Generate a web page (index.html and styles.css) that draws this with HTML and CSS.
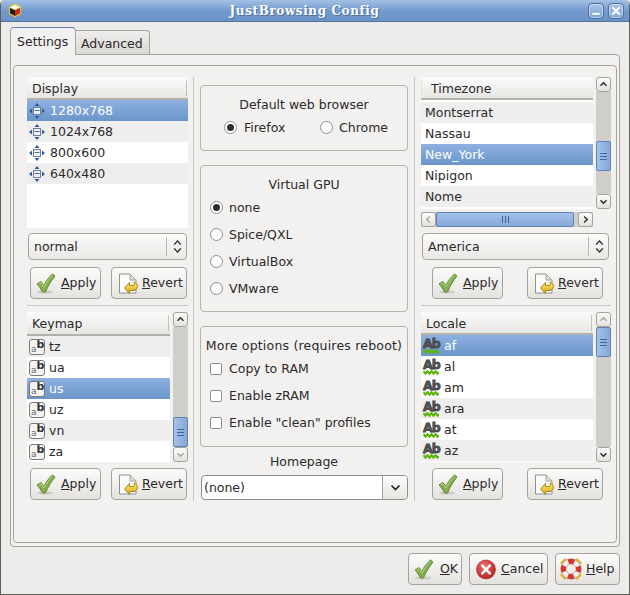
FILE: index.html
```html
<!DOCTYPE html>
<html lang="en">
<head>
  <meta charset="UTF-8">
  <meta name="viewport" content="width=device-width, initial-scale=1.0">
  <title>JustBrowsing Config</title>
  <link rel="stylesheet" href="styles.css">
</head>
<body>

  <svg class="icon-defs" aria-hidden="true">
    <defs>
      <linearGradient id="ringGold" x1="0" y1="0" x2="0" y2="1">
        <stop offset="0" stop-color="#fbe46a"/>
        <stop offset="1" stop-color="#d9a916"/>
      </linearGradient>
      <radialGradient id="redBall" cx="0.4" cy="0.3" r="0.8">
        <stop offset="0" stop-color="#ee6a6a"/>
        <stop offset="1" stop-color="#b01c1c"/>
      </radialGradient>
    </defs>
    <symbol id="i-check" viewBox="0 0 20 21">
      <ellipse cx="9" cy="19" rx="8" ry="1.6" fill="#000" opacity="0.12"/>
      <path d="M1 11 L5 8.5 L7.8 12.5 C10 8 13 4 16.5 1 L19 3 C15 8 12 13 9.5 19 L6.5 19 C5 16 3 13 1 11 Z" fill="#85ae4e" stroke="#618c33" stroke-linejoin="round"/>
      <path d="M3 11 L5 9.8 L8 14 C10.5 9 13.5 5 16.5 2.5" fill="none" stroke="#b4d585" stroke-width="1"/>
    </symbol>
    <symbol id="i-revert" viewBox="0 0 20 21">
      <path d="M1.5 1 H12 L18 7 V20 H1.5 Z" fill="#fbfbf9" stroke="#8f8f8a"/>
      <path d="M12 1 V7 H18 Z" fill="#dedfdc" stroke="#a5a5a0"/>
      <path d="M11.5 9.5 V12.5 H15 C16 12.5 16.5 11 16 9 C19 10 20 13 19 15 C18 17 16.5 17.5 15 17.5 H11.5 V20.5 L6.5 15 Z" fill="url(#ringGold)" stroke="#a8851a" stroke-linejoin="round"/>
    </symbol>
    <symbol id="i-move" viewBox="0 0 16 16">
      <rect x="4.5" y="4.5" width="7" height="7" fill="#eef1f6" stroke="#6d7f99"/>
      <path d="M5.5 7.5 H10.5" stroke="#4d6a96"/>
      <path d="M8 0 L10.5 3 H5.5 Z M8 16 L10.5 13 H5.5 Z M0 8 L3 5.5 V10.5 Z M16 8 L13 5.5 V10.5 Z" fill="#2f5a9c"/>
    </symbol>
    <symbol id="i-wave" viewBox="0 0 16 5">
      <path d="M0.5 1.2 L2.5 3.6 L4.5 1.2 L6.5 3.6 L8.5 1.2 L10.5 3.6 L12.5 1.2 L14.5 3.6 L15.5 2" fill="none" stroke="#5cb30a" stroke-width="2.2"/>
    </symbol>
    <symbol id="i-cancel" viewBox="0 0 20 20">
      <circle cx="10" cy="10" r="9.5" fill="url(#redBall)" stroke="#a81f1f" stroke-width="0.6"/>
      <path d="M6.2 6.2 L13.8 13.8 M13.8 6.2 L6.2 13.8" stroke="#fff" stroke-width="2.6" stroke-linecap="round"/>
    </symbol>
    <symbol id="i-help" viewBox="0 0 22 22">
      <path d="M5 1.5 L1.5 5 M17 1.5 L20.5 5 M1.5 17 L5 20.5 M20.5 17 L17 20.5" stroke="#e3b51f" stroke-width="2.4" stroke-linecap="round"/>
      <circle cx="11" cy="11" r="7.6" fill="none" stroke="#f5f2ee" stroke-width="5.2"/>
      <circle cx="11" cy="11" r="7.6" fill="none" stroke="#d9362c" stroke-width="5.2" stroke-dasharray="6 5.94" stroke-dashoffset="3"/>
      <circle cx="11" cy="11" r="10.1" fill="none" stroke="#a05a50" stroke-width="0.5"/>
      <circle cx="11" cy="11" r="5" fill="#f2f1ef" stroke="#a05a50" stroke-width="0.5"/>
    </symbol>
  </svg>

  <div class="window">
    <header class="titlebar">
      <svg class="app-icon" viewBox="0 0 14 15" aria-hidden="true">
        <path d="M7 0.5 L13 3.5 V11 L7 14.5 L1 11 V3.5 Z" fill="#e6c52a"/>
        <path d="M7 2 L12 4.3 L7 6.6 L2 4.3 Z" fill="#fff"/>
        <path d="M2 5 L7 7.3 V13 L2 10.3 Z" fill="#1c1c1c"/>
        <path d="M12 5 L7 7.3 V13 L12 10.3 Z" fill="#c8281e"/>
      </svg>
      <span class="title-text">JustBrowsing Config</span>
      <div class="wm-buttons">
        <span class="wm-btn"><svg viewBox="0 0 15 15" aria-hidden="true"><path d="M3.5 10.5 H11.5" stroke="#fff" stroke-width="2"/></svg></span>
        <span class="wm-btn"><svg viewBox="0 0 15 15" aria-hidden="true"><path d="M3.5 3.5 L11.5 11.5 M11.5 3.5 L3.5 11.5" stroke="#fff" stroke-width="2.2"/></svg></span>
      </div>
    </header>

    <div class="content">
      <div class="tabs">
        <div class="tab tab-active">Settings</div>
        <div class="tab">Advanced</div>
      </div>

      <div class="notebook">
        <div class="frame">

          <div class="col col-left">
            <div class="listbox listbox-display">
              <div class="tree">
                <div class="tree-head"><span class="head-cell">Display</span></div>
                <div class="row selected"><svg class="row-icon"><use href="#i-move"/></svg>1280x768</div>
                <div class="row alt"><svg class="row-icon"><use href="#i-move"/></svg>1024x768</div>
                <div class="row"><svg class="row-icon"><use href="#i-move"/></svg>800x600</div>
                <div class="row alt"><svg class="row-icon"><use href="#i-move"/></svg>640x480</div>
              </div>
            </div>
            <div class="combo combo-left">
              <span class="combo-label">normal</span>
              <span class="combo-arrows"><svg viewBox="0 0 9 16" aria-hidden="true"><path d="M1 6 L4.5 2 L8 6 M1 10 L4.5 14 L8 10" fill="none" stroke="#222" stroke-width="1.4"/></svg></span>
            </div>
            <div class="btn-row btn-row-left">
              <button class="btn btn-apply"><svg class="btn-icon"><use href="#i-check"/></svg><span><u>A</u>pply</span></button>
              <button class="btn btn-revert"><svg class="btn-icon"><use href="#i-revert"/></svg><span><u>R</u>evert</span></button>
            </div>
            <div class="hsep"></div>
            <div class="listbox listbox-list">
              <div class="tree tree-narrow">
                <div class="tree-head"><span class="head-cell">Keymap</span></div>
                <div class="row alt"><span class="ab-icon" aria-hidden="true"><i>a</i><b>b</b></span>tz</div>
                <div class="row"><span class="ab-icon" aria-hidden="true"><i>a</i><b>b</b></span>ua</div>
                <div class="row selected"><span class="ab-icon" aria-hidden="true"><i>a</i><b>b</b></span>us</div>
                <div class="row"><span class="ab-icon" aria-hidden="true"><i>a</i><b>b</b></span>uz</div>
                <div class="row alt"><span class="ab-icon" aria-hidden="true"><i>a</i><b>b</b></span>vn</div>
                <div class="row"><span class="ab-icon" aria-hidden="true"><i>a</i><b>b</b></span>za</div>
              </div>
              <div class="vscroll">
                <span class="arrow"><svg viewBox="0 0 15 15" aria-hidden="true"><path d="M4 9 L7.5 5.5 L11 9" class="chev"/></svg></span>
                <div class="trough"><div class="thumb thumb-end"><i></i><i></i><i></i></div></div>
                <span class="arrow arrow-off"><svg viewBox="0 0 15 15" aria-hidden="true"><path d="M4 6 L7.5 9.5 L11 6" class="chev"/></svg></span>
              </div>
            </div>
            <div class="btn-row btn-row-left">
              <button class="btn btn-apply"><svg class="btn-icon"><use href="#i-check"/></svg><span><u>A</u>pply</span></button>
              <button class="btn btn-revert"><svg class="btn-icon"><use href="#i-revert"/></svg><span><u>R</u>evert</span></button>
            </div>
          </div>

          <div class="vsep"></div>

          <div class="col col-mid">
            <div class="group group-browser">
              <div class="group-title">Default web browser</div>
              <div class="radio-line">
                <label class="opt opt-firefox"><span class="radio on"></span>Firefox</label>
                <label class="opt"><span class="radio"></span>Chrome</label>
              </div>
            </div>
            <div class="group group-gpu">
              <div class="group-title">Virtual GPU</div>
              <label class="opt opt-row"><span class="radio on"></span>none</label>
              <label class="opt opt-row"><span class="radio"></span>Spice/QXL</label>
              <label class="opt opt-row"><span class="radio"></span>VirtualBox</label>
              <label class="opt opt-row"><span class="radio"></span>VMware</label>
            </div>
            <div class="group group-more">
              <div class="group-title">More options (requires reboot)</div>
              <label class="opt opt-row"><span class="check"></span>Copy to RAM</label>
              <label class="opt opt-row"><span class="check"></span>Enable zRAM</label>
              <label class="opt opt-row"><span class="check"></span>Enable "clean" profiles</label>
            </div>
            <div class="home-label">Homepage</div>
            <div class="combo-entry">
              <span class="entry-text">(none)</span>
              <span class="entry-btn"><svg viewBox="0 0 11 8" aria-hidden="true"><path d="M1.5 1.5 L5.5 5.5 L9.5 1.5" fill="none" stroke="#222" stroke-width="1.7"/></svg></span>
            </div>
          </div>

          <div class="vsep vsep-right"></div>

          <div class="col col-right">
            <div class="listbox listbox-zone">
              <div class="zone-main">
                <div class="tree tree-zone">
                  <div class="tree-head"><span class="head-cell head-zone">Timezone</span></div>
                  <div class="zone-rows">
                    <div class="row alt plain">Montserrat</div>
                    <div class="row plain">Nassau</div>
                    <div class="row selected plain">New_York</div>
                    <div class="row plain">Nipigon</div>
                    <div class="row alt plain">Nome</div>
                  </div>
                </div>
                <div class="hscroll">
                  <span class="arrow arrow-off"><svg viewBox="0 0 15 15" aria-hidden="true"><path d="M9 4 L5.5 7.5 L9 11" class="chev"/></svg></span>
                  <div class="hthumb"><i></i><i></i><i></i></div>
                  <span class="arrow"><svg viewBox="0 0 15 15" aria-hidden="true"><path d="M6 4 L9.5 7.5 L6 11" class="chev"/></svg></span>
                </div>
              </div>
              <div class="vscroll">
                <span class="arrow"><svg viewBox="0 0 15 15" aria-hidden="true"><path d="M4 9 L7.5 5.5 L11 9" class="chev"/></svg></span>
                <div class="trough"><div class="thumb thumb-mid"><i></i><i></i><i></i></div></div>
                <span class="arrow"><svg viewBox="0 0 15 15" aria-hidden="true"><path d="M4 6 L7.5 9.5 L11 6" class="chev"/></svg></span>
              </div>
            </div>
            <div class="combo combo-right">
              <span class="combo-label">America</span>
              <span class="combo-arrows"><svg viewBox="0 0 9 16" aria-hidden="true"><path d="M1 6 L4.5 2 L8 6 M1 10 L4.5 14 L8 10" fill="none" stroke="#222" stroke-width="1.4"/></svg></span>
            </div>
            <div class="btn-row btn-row-right">
              <button class="btn btn-apply"><svg class="btn-icon"><use href="#i-check"/></svg><span><u>A</u>pply</span></button>
              <button class="btn btn-revert"><svg class="btn-icon"><use href="#i-revert"/></svg><span><u>R</u>evert</span></button>
            </div>
            <div class="hsep"></div>
            <div class="listbox listbox-list">
              <div class="tree tree-wide">
                <div class="tree-head"><span class="head-cell">Locale</span></div>
                <div class="row selected"><span class="spell-icon" aria-hidden="true"><b>Ab</b><svg><use href="#i-wave"/></svg></span>af</div>
                <div class="row"><span class="spell-icon" aria-hidden="true"><b>Ab</b><svg><use href="#i-wave"/></svg></span>al</div>
                <div class="row"><span class="spell-icon" aria-hidden="true"><b>Ab</b><svg><use href="#i-wave"/></svg></span>am</div>
                <div class="row alt"><span class="spell-icon" aria-hidden="true"><b>Ab</b><svg><use href="#i-wave"/></svg></span>ara</div>
                <div class="row"><span class="spell-icon" aria-hidden="true"><b>Ab</b><svg><use href="#i-wave"/></svg></span>at</div>
                <div class="row alt"><span class="spell-icon" aria-hidden="true"><b>Ab</b><svg><use href="#i-wave"/></svg></span>az</div>
              </div>
              <div class="vscroll">
                <span class="arrow arrow-off"><svg viewBox="0 0 15 15" aria-hidden="true"><path d="M4 9 L7.5 5.5 L11 9" class="chev"/></svg></span>
                <div class="trough"><div class="thumb"><i></i><i></i><i></i></div></div>
                <span class="arrow"><svg viewBox="0 0 15 15" aria-hidden="true"><path d="M4 6 L7.5 9.5 L11 6" class="chev"/></svg></span>
              </div>
            </div>
            <div class="btn-row btn-row-right">
              <button class="btn btn-apply"><svg class="btn-icon"><use href="#i-check"/></svg><span><u>A</u>pply</span></button>
              <button class="btn btn-revert"><svg class="btn-icon"><use href="#i-revert"/></svg><span><u>R</u>evert</span></button>
            </div>
          </div>

        </div>
      </div>

      <div class="actions">
        <button class="btn btn-ok"><svg class="btn-icon"><use href="#i-check"/></svg><span><u>O</u>K</span></button>
        <button class="btn btn-cancel"><svg class="btn-icon"><use href="#i-cancel"/></svg><span><u>C</u>ancel</span></button>
        <button class="btn btn-help"><svg class="btn-icon btn-icon-help"><use href="#i-help"/></svg><span><u>H</u>elp</span></button>
      </div>
    </div>
  </div>

</body>
</html>
```

FILE: styles.css
```css
* {
  box-sizing: border-box;
}

html, body {
  margin: 0;
  padding: 0;
}

body {
  width: 630px;
  height: 595px;
  overflow: hidden;
  font-family: 'DejaVu Sans', sans-serif;
  font-size: 12.5px;
  color: #2a2a2a;
  background-color: #edecea;
}

.icon-defs {
  position: absolute;
  width: 0;
  height: 0;
}

.window {
  width: 630px;
  height: 595px;
  display: flex;
  flex-direction: column;
  border: 1px solid #5f5f5c;
  border-top: 0;
  border-radius: 5px 5px 0 0;
  background-color: #edecea;
}

/* title bar */
.titlebar {
  height: 22px;
  flex: none;
  display: flex;
  align-items: center;
  padding: 0 5px 0 7px;
  background: linear-gradient(#a4c0e4, #7199cd 55%, #6c93c6);
  border-bottom: 1px solid #53739f;
  border-radius: 5px 5px 0 0;
}

.app-icon {
  width: 14px;
  height: 15px;
}

.title-text {
  flex: 1;
  padding-right: 1px;
  text-align: center;
  font-family: 'DejaVu Serif', serif;
  font-weight: bold;
  font-size: 12px;
  letter-spacing: 0.6px;
  color: #fff;
  text-shadow: 1px 1px 0 #4d6d9c;
}

.wm-buttons {
  display: flex;
  gap: 4px;
}

.wm-btn {
  width: 16px;
  height: 16px;
  border: 1px solid #4a6c9d;
  border-radius: 4px;
  background: linear-gradient(#a9c4e6, #7fa3d2);
  box-shadow: inset 0 0 0 1px rgba(255, 255, 255, 0.45);
  display: block;
}

.wm-btn svg {
  display: block;
  width: 14px;
  height: 14px;
}

.content {
  flex: 1;
  display: flex;
  flex-direction: column;
  padding: 5px 9px 0;
}

/* tabs */
.tabs {
  display: flex;
  align-items: flex-end;
  height: 27px;
  flex: none;
  position: relative;
  z-index: 1;
}

.tab {
  height: 24px;
  padding: 5px 6px 0 5px;
  background: linear-gradient(#efeeec, #d9d8d5);
  border: 1px solid #a6a39f;
  border-left: 0;
  border-bottom: 0;
  border-radius: 0 4px 0 0;
}

.tab-active {
  height: 28px;
  width: 66px;
  padding: 6px 0 0 6px;
  background: #f2f1ef;
  border: 1px solid #a6a39f;
  border-top: 1px solid #5e83b3;
  border-bottom: 0;
  border-radius: 4px 4px 0 0;
  margin-bottom: -1px;
}

.notebook {
  height: 493px;
  flex: none;
  padding: 10px 2px 2px;
  background-color: #f2f1ef;
  border: 1px solid #a6a39f;
  border-radius: 0 4px 4px 4px;
}

.frame {
  height: 478px;
  display: flex;
  padding: 11px 5px 0 13px;
  border: 1px solid #a6a39f;
  border-radius: 4px;
}

.col {
  flex: none;
}

.col-left {
  width: 161px;
}

.col-mid {
  width: 208px;
  padding-top: 8px;
}

.col-right {
  width: 190px;
}

.vsep {
  width: 1px;
  height: 424px;
  flex: none;
  margin: 0 6px 0 5px;
  background-color: #c9c7c3;
}

.vsep-right {
  margin-left: 6px;
}

/* lists */
.listbox {
  display: flex;
  gap: 3px;
}

.listbox-display {
  height: 151px;
  background-color: #fff;
}

.listbox-list {
  height: 150px;
}

.listbox-zone {
  height: 151px;
}

.tree {
  width: 100%;
  background-color: #fff;
}

.tree-narrow {
  width: 143px;
}

.tree-narrow .tree-head {
  height: 24px;
}

.tree-wide, .tree-zone {
  width: 172px;
}

.zone-main {
  width: 172px;
}

.tree-zone {
  height: 132px;
}

.zone-rows {
  padding-top: 2px;
}

.tree-head {
  height: 23px;
  padding: 3px 1px 1px 0;
  background: linear-gradient(#fbfbfa, #e7e6e3);
  border-bottom: 2px solid #b3b1ac;
}

.head-cell {
  display: block;
  height: 16px;
  line-height: 18px;
  padding-left: 5px;
  border-right: 1px solid #c4c2be;
}

.head-zone {
  padding-left: 9px;
  border-right: 0;
  border-left: 1px solid #e2e1de;
}

.row {
  height: 21px;
  line-height: 21px;
  display: flex;
  align-items: center;
  padding-left: 2px;
  white-space: nowrap;
}

.row.plain {
  padding-left: 4px;
}

.row.alt {
  background-color: #eeeeee;
}

.row.selected {
  background: linear-gradient(#8db1e0, #6b95ca);
  color: #fff;
}

.row-icon {
  width: 16px;
  height: 16px;
  margin-right: 5px;
  flex: none;
}

/* keymap and locale row icons */
.ab-icon {
  width: 16px;
  height: 16px;
  margin-right: 4px;
  flex: none;
  display: flex;
  justify-content: space-between;
  padding: 0 0 0 1px;
  background-color: #f4f4f2;
  border: 1px solid #77797a;
  border-radius: 3px;
  color: #2e3436;
}

.ab-icon i {
  font-style: normal;
  font-size: 9px;
  color: #666;
  align-self: flex-end;
  line-height: 9px;
}

.ab-icon b {
  font-size: 11px;
  line-height: 10px;
}

.spell-icon {
  width: 16px;
  height: 16px;
  margin-right: 5px;
  flex: none;
  display: flex;
  flex-direction: column;
  color: #555;
}

.spell-icon b {
  display: block;
  height: 11px;
  line-height: 11px;
  font-size: 12.5px;
  letter-spacing: -1px;
  -webkit-text-stroke: 0.8px #444;
}

.spell-icon svg {
  display: block;
  width: 16px;
  height: 5px;
}

/* scrollbars */
.vscroll {
  width: 15px;
  flex: none;
  display: flex;
  flex-direction: column;
  border-radius: 4px;
}

.listbox-zone .vscroll {
  height: 132px;
}

.arrow {
  width: 15px;
  height: 15px;
  flex: none;
  display: block;
  background: linear-gradient(#fbfbfa, #e2e1de);
  border: 1px solid #a6a39f;
  border-radius: 3px;
}

.arrow svg {
  display: block;
  width: 13px;
  height: 13px;
}

.chev {
  fill: none;
  stroke: #222;
  stroke-width: 1.5;
}

.arrow-off .chev {
  stroke: #a6a39f;
}

.trough {
  flex: 1;
  background-color: #cfcecb;
}

.thumb {
  height: 30px;
  display: flex;
  flex-direction: column;
  align-items: center;
  justify-content: center;
  gap: 2px;
  background: linear-gradient(90deg, #a4c2e8, #86a9da);
  border: 1px solid #5e83b3;
  border-radius: 2px;
}

.thumb i {
  display: block;
  width: 7px;
  height: 1px;
  background-color: #45659a;
}

.thumb-mid {
  margin-top: 49px;
}

.thumb-end {
  margin-top: 90px;
}

.hscroll {
  height: 15px;
  margin-top: 3px;
  display: flex;
  width: 172px;
  background-color: #cfcecb;
}

.hthumb {
  width: 138px;
  margin-right: 4px;
  display: flex;
  align-items: center;
  justify-content: center;
  gap: 2px;
  background: linear-gradient(#a4c2e8, #86a9da);
  border: 1px solid #5e83b3;
  border-radius: 2px;
}

.hthumb i {
  display: block;
  width: 1px;
  height: 7px;
  background-color: #45659a;
}

/* combos */
.combo {
  height: 27px;
  margin-top: 5px;
  display: flex;
  align-items: center;
  justify-content: space-between;
  padding-left: 5px;
  background: linear-gradient(#fbfbfa, #e9e8e5);
  border: 1px solid #a6a39f;
  border-radius: 4px;
}

.combo-left {
  width: 159px;
  margin-left: 1px;
}

.combo-right {
  width: 187px;
  margin-left: 1px;
}

.combo-arrows {
  width: 20px;
  height: 19px;
  padding: 2px 0 0 6px;
  border-left: 1px solid #b9b7b2;
}

.combo-arrows svg {
  display: block;
  width: 9px;
  height: 15px;
}

.combo-entry {
  height: 25px;
  margin: 5px 0 0 1px;
  display: flex;
  border: 1px solid #8f8d89;
  border-radius: 4px;
  background-color: #fff;
}

.entry-text {
  flex: 1;
  padding: 4px 0 0 2px;
}

.entry-btn {
  width: 25px;
  padding: 8px 0 0 7px;
  background: linear-gradient(#fbfbfa, #e6e5e2);
  border-left: 1px solid #a6a39f;
  border-radius: 0 3px 3px 0;
}

.entry-btn svg {
  display: block;
  width: 11px;
  height: 8px;
}

/* buttons */
.btn-row {
  display: flex;
  margin-top: 7px;
  height: 32px;
}

.listbox-list + .btn-row {
  margin-top: 6px;
}

.btn-row-left {
  padding: 0 1px 0 3px;
  justify-content: space-between;
}

.btn-row-right {
  padding: 0 8px 0 11px;
  justify-content: space-between;
}

.btn {
  height: 32px;
  display: flex;
  align-items: center;
  padding: 0;
  font-family: inherit;
  font-size: 12.5px;
  color: #2a2a2a;
  background: linear-gradient(#fbfbfa, #f0efed 50%, #e3e2df);
  border: 1px solid #a6a39f;
  border-radius: 4px;
}

.btn span {
  padding-bottom: 2px;
}

.btn-icon {
  width: 20px;
  height: 21px;
  flex: none;
}

.btn-apply {
  width: 71px;
  padding-left: 5px;
  gap: 5px;
}

.btn-revert {
  width: 76px;
  padding-left: 6px;
  gap: 4px;
}

.hsep {
  height: 1px;
  margin: 6px 0;
  background-color: #c9c7c3;
}

/* bottom buttons */
.actions {
  display: flex;
  justify-content: flex-end;
  gap: 7px;
  margin-top: 6px;
}

.btn-ok {
  width: 54px;
  padding-left: 5px;
  gap: 6px;
}

.btn-cancel {
  width: 79px;
  padding-left: 6px;
  gap: 5px;
}

.btn-help {
  width: 65px;
  padding-left: 4px;
  gap: 4px;
}

.btn-icon-help {
  width: 22px;
  height: 22px;
}

/* option groups */
.group {
  border: 1px solid #b4b2ad;
  border-radius: 4px;
  margin-bottom: 14px;
}

.group-title {
  text-align: center;
  height: 16px;
  line-height: 16px;
}

.group-browser {
  height: 66px;
  padding-top: 11px;
}

.group-gpu {
  height: 147px;
  padding-top: 11px;
}

.group-more {
  height: 121px;
  padding-top: 11px;
  margin-bottom: 7px;
  white-space: nowrap;
}

.group-more .group-title {
  letter-spacing: 0.2px;
}

.radio-line {
  display: flex;
  margin-top: 7px;
  padding-left: 23px;
}

.opt {
  display: flex;
  align-items: center;
}

.opt-firefox {
  width: 96px;
}

.opt-firefox .radio {
  margin-right: 7px;
}

.opt-row {
  height: 27px;
  padding-left: 9px;
}

.group-gpu .group-title, .group-more .group-title {
  margin-bottom: 1px;
}

.radio {
  width: 13px;
  height: 13px;
  margin-right: 6px;
  flex: none;
  position: relative;
  background-color: #fff;
  border: 1px solid #8f8d89;
  border-radius: 50%;
}

.radio.on::after {
  content: "";
  position: absolute;
  left: 2px;
  top: 2px;
  width: 7px;
  height: 7px;
  border-radius: 50%;
  background-color: #2e2e2e;
}

.check {
  width: 12px;
  height: 12px;
  margin-right: 7px;
  flex: none;
  background-color: #fff;
  border: 1px solid #8f8d89;
  border-radius: 2px;
}

.home-label {
  text-align: center;
  height: 16px;
  line-height: 16px;
}
```
